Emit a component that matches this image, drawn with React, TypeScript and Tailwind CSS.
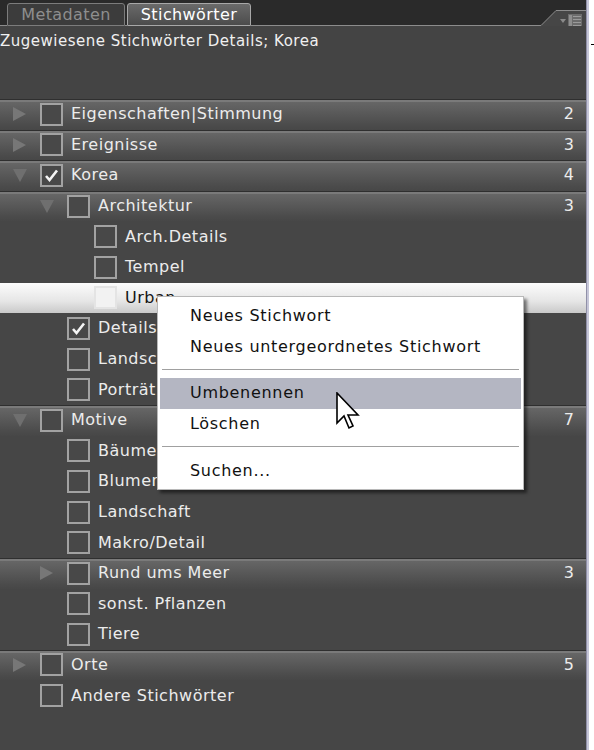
import React from "react";

type Row = {
  label: string;
  level: number;
  arrow?: "right" | "down";
  checked?: boolean;
  count?: number;
  header?: boolean;
  selected?: boolean;
};

const rows: Row[] = [
  { label: "Eigenschaften|Stimmung", level: 0, arrow: "right", count: 2, header: true },
  { label: "Ereignisse", level: 0, arrow: "right", count: 3, header: true },
  { label: "Korea", level: 0, arrow: "down", checked: true, count: 4, header: true },
  { label: "Architektur", level: 1, arrow: "down", count: 3, header: true },
  { label: "Arch.Details", level: 2 },
  { label: "Tempel", level: 2 },
  { label: "Urban", level: 2, selected: true },
  { label: "Details", level: 1, checked: true },
  { label: "Landschaft", level: 1 },
  { label: "Porträt", level: 1 },
  { label: "Motive", level: 0, arrow: "down", count: 7, header: true },
  { label: "Bäume", level: 1 },
  { label: "Blumen", level: 1 },
  { label: "Landschaft", level: 1 },
  { label: "Makro/Detail", level: 1 },
  { label: "Rund ums Meer", level: 1, arrow: "right", count: 3, header: true },
  { label: "sonst. Pflanzen", level: 1 },
  { label: "Tiere", level: 1 },
  { label: "Orte", level: 0, arrow: "right", count: 5, header: true },
  { label: "Andere Stichwörter", level: 0 },
];

const indent = ["pl-[12px]", "pl-[39px]", "pl-[66px]"];

function Arrow({ dir }: { dir: "right" | "down" }) {
  return (
    <svg width="16" height="16" viewBox="0 0 16 16">
      {dir === "right" ? (
        <path d="M1 1 L14 8 L1 15 Z" fill="#777777" />
      ) : (
        <path d="M1 2 L15 2 L8 15 Z" fill="#6f6f6f" />
      )}
    </svg>
  );
}

function Checkbox({ checked, light }: { checked?: boolean; light?: boolean }) {
  return (
    <div
      className={
        light
          ? "w-[23px] h-[23px] border-2 border-[#e4e4e4] bg-[#f2f2f2] flex items-center justify-center"
          : "w-[23px] h-[23px] border-2 border-[#a2a2a2] bg-[#484848] flex items-center justify-center"
      }
    >
      {checked && (
        <svg width="15" height="13" viewBox="0 0 15 13">
          <path d="M2 7 L5.5 11 L13 1.5" stroke="#f4f4f4" strokeWidth="2.6" fill="none" />
        </svg>
      )}
    </div>
  );
}

function TreeRow({ row }: { row: Row }) {
  const bg = row.selected
    ? "bg-[linear-gradient(#fcfcfc,#e6e6e6_60%,#c9c9c9)] text-[#151515]"
    : row.header
    ? "bg-[linear-gradient(#2f2f2f_0,#2f2f2f_1px,#7a7a7a_1px,#7a7a7a_3px,#666666_3px,#4b4b4b_85%,#474747_100%)] text-[#ececec]"
    : "text-[#ececec]";
  return (
    <div className={`h-[30.6px] flex items-center ${indent[row.level]} ${bg}`}>
      <div className="w-[28px] flex items-center">{row.arrow && <Arrow dir={row.arrow} />}</div>
      <Checkbox checked={row.checked} light={row.selected} />
      <span className="ml-[8px] text-[16px] tracking-[0.5px] leading-none">{row.label}</span>
      {row.count !== undefined && (
        <span className="ml-auto pr-[12px] text-[16px] leading-none">{row.count}</span>
      )}
    </div>
  );
}

function MenuItem({ label, active }: { label: string; active?: boolean }) {
  return (
    <div
      className={`h-[31px] flex items-center pl-[30px] text-[16px] tracking-[0.7px] text-[#111] ${
        active ? "bg-[#b4b6c2]" : ""
      }`}
    >
      {label}
    </div>
  );
}

function Separator() {
  return (
    <div className="h-[15.5px] flex items-center px-[2px]">
      <div className="w-full h-[2px] border-t border-[#a0a0a0] border-b border-b-white" />
    </div>
  );
}

export default function App() {
  return (
    <div
      className="w-[594px] h-[750px] flex bg-white overflow-hidden"
      style={{ fontFamily: '"DejaVu Sans", Verdana, sans-serif' }}
    >
      <div className="w-[586px] h-full flex flex-col bg-[#464646] relative">
        {/* tab strip */}
        <div className="h-[26px] flex items-end bg-[#2a2a2a]">
          <div className="w-[7px] h-full border-b border-[#8c8c8c]" />
          <div className="w-[118px] h-[23px] flex items-center justify-center border border-[#7c7c7c] rounded-t-[3px] bg-[#3c3c3c] text-[#8e8e8e] text-[16px] tracking-[0.4px]">
            Metadaten
          </div>
          <div className="w-[2px] h-full border-b border-[#8c8c8c]" />
          <div className="w-[124px] h-[23px] flex items-center justify-center border border-[#a8a8a8] rounded-t-[3px] bg-[linear-gradient(#6a6a6a,#4c4c4c)] text-white text-[16px] tracking-[0.4px]">
            Stichwörter
          </div>
          <div className="flex-1 h-full border-b border-[#8c8c8c]" />
          <svg width="17" height="26" viewBox="0 0 17 26" className="block">
            <path d="M0 26 L0 25.5 L1 25.5 L16 10.5 L17 10.5 L17 26 Z" fill="#464646" />
            <path d="M0 25.5 L1 25.5 L16 10.5 L17 10.5" stroke="#8c8c8c" strokeWidth="1" fill="none" />
          </svg>
          <div className="w-[29px] h-[16px] bg-[#464646] border-t border-[#8c8c8c] flex items-start justify-end pr-[4px] pt-[3px] gap-[1px]">
            <svg width="7" height="10" viewBox="0 0 7 10">
              <path d="M0 5 L6 5 L3 9 Z" fill="#8a8a8a" />
            </svg>
            <svg width="14" height="13" viewBox="0 0 14 13">
              <rect x="0" y="0" width="14" height="13" fill="#6c6c6c" />
              <rect x="1" y="1" width="3" height="11" fill="#8e8e8e" />
              <rect x="5" y="2" width="8" height="1" fill="#9a9a9a" />
              <rect x="5" y="5" width="8" height="1" fill="#9a9a9a" />
              <rect x="5" y="8" width="8" height="1" fill="#9a9a9a" />
              <rect x="5" y="11" width="8" height="1" fill="#9a9a9a" />
            </svg>
          </div>
        </div>

        {/* info */}
        <div className="h-[73px] pt-[8px] text-[15px] tracking-[0.5px] text-[#f0f0f0] leading-none bg-[#444444]">
          Zugewiesene Stichwörter Details; Korea
        </div>

        {/* tree */}
        <div className="flex flex-col">
          {rows.map((r, i) => (
            <TreeRow key={i} row={r} />
          ))}
        </div>

        {/* context menu */}
        <div className="absolute left-[157px] top-[296px] w-[367px] bg-white border border-[#b8b8b8] shadow-[3px_3px_3px_rgba(0,0,0,0.5)] py-[3px] px-[2px] flex flex-col">
          <MenuItem label="Neues Stichwort" />
          <MenuItem label="Neues untergeordnetes Stichwort" />
          <Separator />
          <MenuItem label="Umbenennen" active />
          <MenuItem label="Löschen" />
          <Separator />
          <MenuItem label="Suchen..." />
        </div>

        {/* mouse pointer */}
        <svg
          className="absolute left-[336px] top-[392px]"
          width="24"
          height="38"
          viewBox="0 0 12 19"
        >
          <path
            d="M0.5 0.5 L0.5 15.5 L4 12 L6.5 18 L8.5 17 L6 11.5 L11 11.5 Z"
            fill="white"
            stroke="black"
            strokeWidth="0.8"
            strokeLinejoin="miter"
          />
        </svg>
      </div>
      <div className="w-[3px] h-full bg-[#c6c6d8] border-l border-[#9090a8]" />
      <div className="flex-1 h-full bg-white relative">
        <div className="absolute left-[2px] top-[44px] w-[3px] h-[1px] bg-black" />
      </div>
    </div>
  );
}
